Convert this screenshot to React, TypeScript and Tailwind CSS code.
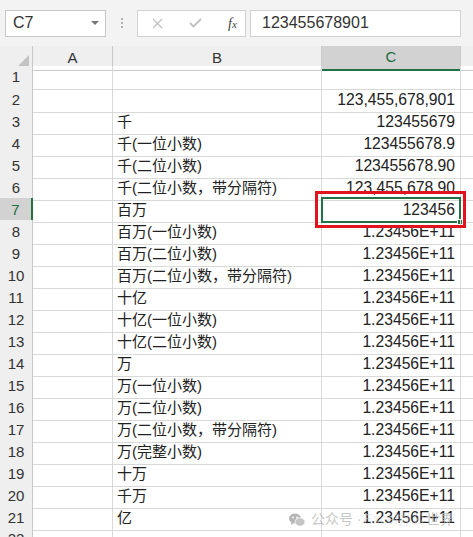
import React from 'react';

const ROWS: [string, string][] = [
  ['', ''],
  ['', '123,455,678,901'],
  ['千', '123455679'],
  ['千(一位小数)', '123455678.9'],
  ['千(二位小数)', '123455678.90'],
  ['千(二位小数，带分隔符)', '123,455,678.90'],
  ['百万', '123456'],
  ['百万(一位小数)', '1.23456E+11'],
  ['百万(二位小数)', '1.23456E+11'],
  ['百万(二位小数，带分隔符)', '1.23456E+11'],
  ['十亿', '1.23456E+11'],
  ['十亿(一位小数)', '1.23456E+11'],
  ['十亿(二位小数)', '1.23456E+11'],
  ['万', '1.23456E+11'],
  ['万(一位小数)', '1.23456E+11'],
  ['万(二位小数)', '1.23456E+11'],
  ['万(二位小数，带分隔符)', '1.23456E+11'],
  ['万(完整小数)', '1.23456E+11'],
  ['十万', '1.23456E+11'],
  ['千万', '1.23456E+11'],
  ['亿', '1.23456E+11'],
  ['', ''],
];

const font = { fontFamily: '"Liberation Sans", "Noto Sans CJK SC", sans-serif' };

const WeChatIcon = () => (
  <svg width="16" height="14" viewBox="0 0 16 14" fill="#b5b5b5">
    <ellipse cx="6" cy="5.5" rx="6" ry="5" />
    <path d="M2.5 9 L2 12 L5 10 Z" />
    <ellipse cx="11" cy="9" rx="5" ry="4.2" fill="#c4c4c4" stroke="#fff" strokeWidth="0.8" />
    <circle cx="4" cy="4.5" r="0.9" fill="#fff" />
    <circle cx="8" cy="4.5" r="0.9" fill="#fff" />
  </svg>
);

export default function App() {
  return (
    <div className="relative w-[473px] h-[537px] overflow-hidden bg-white text-[#222]" style={font}>
      {/* formula bar */}
      <div className="flex items-center h-[46px] bg-[#f3f3f3]">
        <div className="ml-[5px] w-[101px] h-[27px] bg-white border border-[#c8c8c8] flex items-center justify-between pl-[7px] pr-[6px]">
          <span className="text-[16px] text-[#333]">C7</span>
          <span className="w-0 h-0 border-l-[4px] border-r-[4px] border-t-[4px] border-l-transparent border-r-transparent border-t-[#777]" />
        </div>
        <div className="w-[31px] flex flex-col items-center gap-[2px]">
          <span className="w-[2px] h-[2px] bg-[#b0b0b0]" />
          <span className="w-[2px] h-[2px] bg-[#b0b0b0]" />
          <span className="w-[2px] h-[2px] bg-[#b0b0b0]" />
        </div>
        <div className="w-[109px] h-[27px] bg-white border border-[#d2d2d2] flex items-center">
          <svg className="ml-[14px]" width="11" height="11" viewBox="0 0 11 11" stroke="#c0c0c0" strokeWidth="1.3">
            <path d="M1 1 L10 10 M10 1 L1 10" />
          </svg>
          <svg className="ml-[26px]" width="13" height="10" viewBox="0 0 13 10" stroke="#c0c0c0" strokeWidth="1.8" fill="none">
            <path d="M1 5 L4.5 8.5 L12 1" />
          </svg>
          <span className="ml-[26px] text-[14px] italic text-[#444]" style={{ fontFamily: '"Liberation Serif", serif' }}>
            f<span className="text-[11px]">x</span>
          </span>
        </div>
        <div className="ml-[4px] w-[211px] h-[27px] bg-white border border-[#d2d2d2] flex items-center pl-[11px]">
          <span className="text-[16px] text-[#333]">123455678901</span>
        </div>
      </div>

      {/* column headers */}
      <div className="grid grid-cols-[33px_80px_209px_139px_1fr] h-[20px] bg-[#efefef] text-[15px] text-[#333]">
        <div className="flex items-end justify-end pr-[3px] pb-[3px] border-r border-b border-[#c8c8c8]">
          <svg width="12" height="12" viewBox="0 0 12 12">
            <polygon points="12,0 12,12 0,12" fill="#c4c4c4" />
          </svg>
        </div>
        <div className="flex items-center justify-center border-r border-b border-[#c8c8c8]">A</div>
        <div className="flex items-center justify-center border-r border-b border-[#c8c8c8]">B</div>
        <div className="flex items-center justify-center bg-[#d2d2d2] text-[#1f6e43] border-r border-[#c8c8c8] border-b-2 border-b-[#217346]">C</div>
        <div className="border-b border-[#c8c8c8]" />
      </div>

      {/* rows */}
      {ROWS.map(([label, value], i) => {
        const n = i + 1;
        const sel = n === 7;
        return (
          <div key={n} className="grid grid-cols-[33px_80px_209px_139px_1fr] h-[22px] text-[15px]">
            <div
              className={
                sel
                  ? 'flex items-center justify-center bg-[#d2d2d2] text-[#1f6e43] border-b border-[#c8c8c8] border-r-2 border-r-[#217346]'
                  : 'flex items-center justify-center bg-[#efefef] text-[#333] border-r border-b border-[#c8c8c8]'
              }
            >
              {n}
            </div>
            <div className="border-r border-b border-[#d9d9d9]" />
            <div className="flex items-center pl-[4px] border-r border-b border-[#d9d9d9] whitespace-nowrap">{label}</div>
            <div className="relative flex items-center justify-end pr-[5px] border-r border-b border-[#d9d9d9] text-[15.7px] whitespace-nowrap">
              {value}
              {sel && (
                <>
                  <span className="absolute -left-[1px] -top-[1px] -right-[1px] -bottom-[1px] border-2 border-[#217346]" />
                  <span className="absolute -right-[3px] -bottom-[3px] w-[6px] h-[6px] bg-[#217346] border border-white" />
                </>
              )}
            </div>
            <div className="border-b border-[#d9d9d9]" />
          </div>
        );
      })}

      {/* highlight box */}
      <div className="absolute left-[315px] top-[191px] w-[151px] h-[37px] border-[3px] border-[#e0141e]" />

      {/* watermark */}
      <div className="absolute left-[289px] top-[509px] flex items-center gap-[6px] text-[14px] text-[#b8b8b8]/80 pointer-events-none">
        <WeChatIcon />
        <span>公众号 · </span>
        <span className="text-[#d8d8d8]/50 ml-[-4px]">Excel办公</span>
        <span className="ml-[-6px]">世界</span>
      </div>
    </div>
  );
}
